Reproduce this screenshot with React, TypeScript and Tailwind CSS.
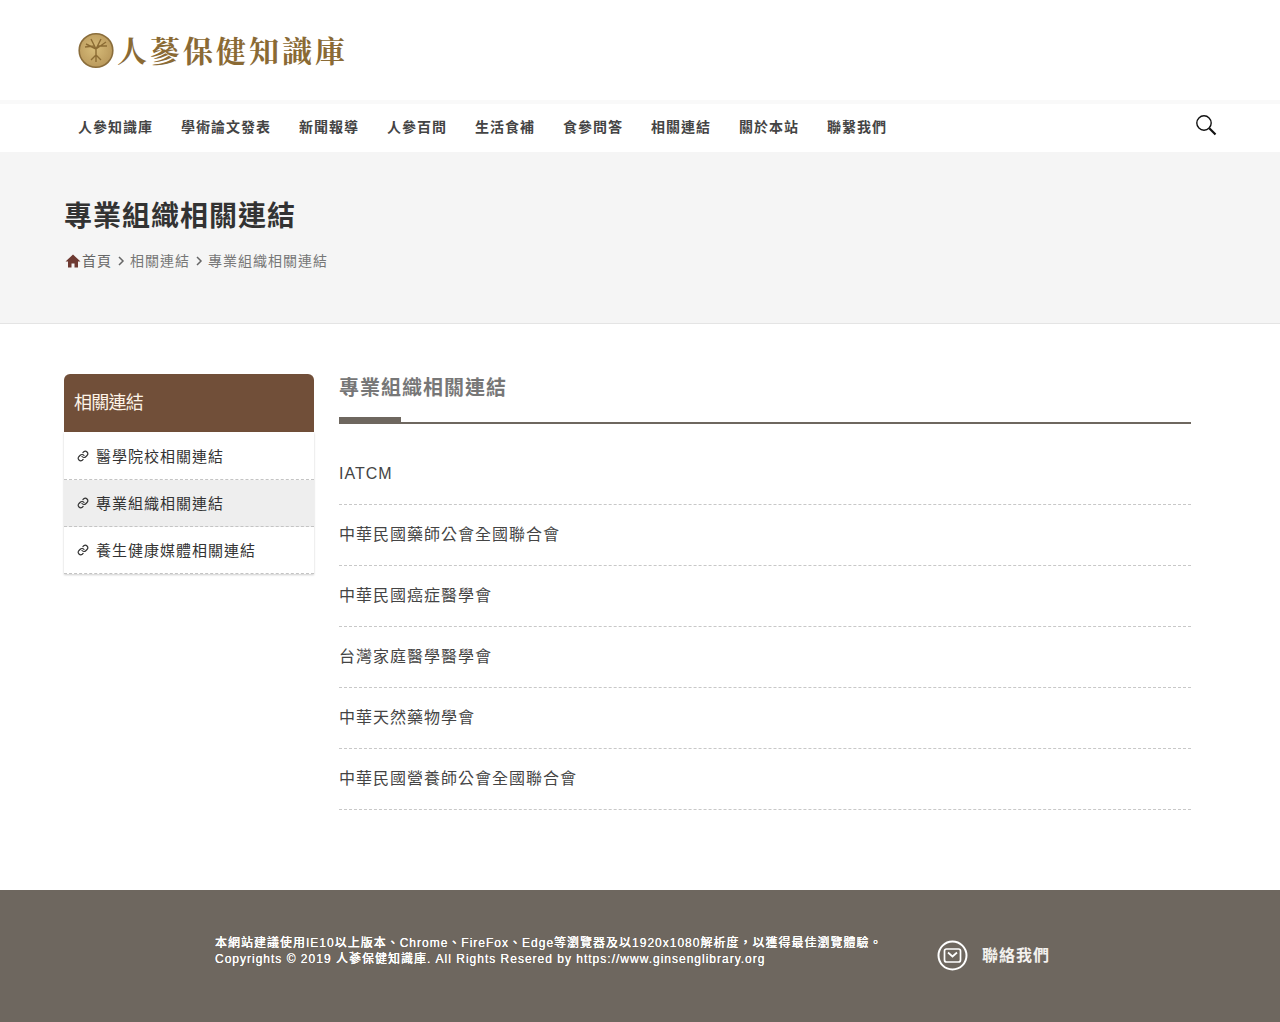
import React from "react";

const font = { fontFamily: '"Liberation Sans","Noto Sans CJK TC",sans-serif' };
const nav = ["人參知識庫", "學術論文發表", "新聞報導", "人參百問", "生活食補", "食參問答", "相關連結", "關於本站", "聯繫我們"];
const side = ["醫學院校相關連結", "專業組織相關連結", "養生健康媒體相關連結"];
const rows = ["IATCM", "中華民國藥師公會全國聯合會", "中華民國癌症醫學會", "台灣家庭醫學醫學會", "中華天然藥物學會", "中華民國營養師公會全國聯合會"];

function LinkIcon() {
  return (
    <svg width="12" height="12" viewBox="0 0 24 24" fill="none" stroke="#333" strokeWidth="2.4" strokeLinecap="round" strokeLinejoin="round" className="shrink-0 -mt-[2px]">
      <path d="M10 13a5 5 0 0 0 7.5.5l3-3a5 5 0 0 0-7-7l-1.7 1.7" />
      <path d="M14 11a5 5 0 0 0-7.5-.5l-3 3a5 5 0 0 0 7 7l1.7-1.7" />
    </svg>
  );
}

function Chevron() {
  return (
    <svg width="8" height="10" viewBox="0 0 8 10" fill="none" stroke="#666" strokeWidth="1.5" className="mx-[5px] shrink-0">
      <path d="M2 1l4 4-4 4" />
    </svg>
  );
}

export default function App() {
  return (
    <div style={font} className="w-[1280px] min-h-[1022px] bg-white flex flex-col">
      <header className="h-[100px] pl-[78px] pt-[32px] flex items-start">
        <svg width="36" height="37" viewBox="0 0 36 37" className="shrink-0">
          <defs>
            <radialGradient id="coin" cx="45%" cy="45%" r="60%">
              <stop offset="0%" stopColor="#d8bd7a" />
              <stop offset="100%" stopColor="#b8975a" />
            </radialGradient>
          </defs>
          <circle cx="18" cy="18.5" r="16.8" fill="url(#coin)" stroke="#8a6d3b" strokeWidth="1.6" />
          <path d="M18 30V17M18 17L8 12M18 17L28 10M18 17L13 7M18 17L23 7M18 23L13 28M18 23L23 28M7 15L16 14M29 14L20 14" stroke="#8c6c34" strokeWidth="1.4" fill="none" />
        </svg>
        <span className="ml-[3px] -mt-[1px] text-[30px] leading-[36px] tracking-[3px] font-bold text-[#8a6a34] whitespace-nowrap" style={{ fontFamily: '"Noto Serif CJK TC","Noto Sans CJK TC",serif' }}>
          人蔘保健知識庫
        </span>
      </header>
      <div className="h-[4px] bg-[#f9f9f9]" />
      <nav className="h-[48px] pl-[78px] pr-[63px] flex items-center">
        <ul className="flex gap-[14px] flex-1 mb-[2px]">
          {nav.map((n) => (
            <li key={n} className="text-[14px] font-bold tracking-[1px] text-[#444] whitespace-nowrap mr-[14px]">{n}</li>
          ))}
        </ul>
        <svg width="22" height="22" viewBox="0 0 22 22" fill="none" stroke="#111" className="mb-[6px]">
          <circle cx="9" cy="9" r="7.2" strokeWidth="1.4" />
          <path d="M14.3 14.3L20.5 20.5" strokeWidth="2.2" />
        </svg>
      </nav>
      <section className="h-[172px] bg-[#f5f5f5] border-b border-[#e4e4e4] pl-[64px] pt-[46px]">
        <h1 className="text-[28px] leading-[38px] font-bold tracking-[1px] text-[#333]">專業組織相關連結</h1>
        <div className="mt-[15px] ml-[1px] flex items-center text-[14px] leading-[20px] tracking-[1px] text-[#777]">
          <svg width="16" height="14" viewBox="0 0 16 14" className="shrink-0 mr-[1px]">
            <path d="M8 0.5L0.5 7.5H3V13.5H6.5V9.5H9.5V13.5H13V7.5H15.5Z" fill="#6e3a32" />
          </svg>
          <span className="text-[#666]">首頁</span>
          <Chevron />
          <span>相關連結</span>
          <Chevron />
          <span>專業組織相關連結</span>
        </div>
      </section>
      <main className="flex pl-[64px] pr-[89px] pt-[50px] h-[566px] gap-[25px]">
        <aside className="w-[250px] shrink-0">
          <div className="h-[58px] bg-[#714f39] rounded-t-[6px] px-[10px] flex items-center text-[18px] tracking-[-0.75px] text-[#fdf3e7]">相關連結</div>
          <ul className="pt-[1px] shadow-[0_1px_2px_rgba(0,0,0,0.2)]">
            {side.map((s, i) => (
              <li key={s} className={`h-[47px] pl-[13px] pt-[2px] flex items-center gap-[7px] border-b border-dashed border-[#c4c4c4] text-[15px] tracking-[1px] text-[#333] ${i === 1 ? "bg-[#eeeeee]" : "bg-white"}`}>
                <LinkIcon />
                <span>{s}</span>
              </li>
            ))}
          </ul>
        </aside>
        <div className="flex-1">
          <h2 className="text-[20px] leading-[28px] font-bold tracking-[1px] text-[#777]">專業組織相關連結</h2>
          <div className="relative mt-[15px] h-[7px] border-b-2 border-[#6e675f]">
            <div className="absolute left-0 top-0 w-[62px] h-[7px] bg-[#6e675f]" />
          </div>
          <ul className="mt-[20px]">
            {rows.map((r) => (
              <li key={r} className="h-[61px] flex items-center border-b border-dashed border-[#c8c8c8] text-[16px] tracking-[1px] text-[#444] pb-[1px]">{r}</li>
            ))}
          </ul>
        </div>
      </main>
      <footer className="h-[132px] bg-[#6e675f] pl-[215px] flex items-start text-white">
        <div className="pt-[45px] text-[12px] leading-[16px] font-medium tracking-[1px] text-white [text-shadow:0_0_0.6px_#fff] whitespace-nowrap w-[722px]">
          <div>本網站建議使用IE10以上版本、Chrome、FireFox、Edge等瀏覽器及以1920x1080解析度，以獲得最佳瀏覽體驗。</div>
          <div>Copyrights © 2019 人蔘保健知識庫. All Rights Resered by https://www.ginsenglibrary.org</div>
        </div>
        <div className="pt-[50px] flex items-center gap-[14px]">
          <svg width="31" height="31" viewBox="0 0 31 31" fill="none" stroke="#fff">
            <circle cx="15.5" cy="15.5" r="14" strokeWidth="2" />
            <rect x="7.5" y="9" width="16" height="13" rx="2" strokeWidth="1.7" />
            <path d="M11 12.5L15.5 16.5L20 12.5" strokeWidth="1.7" />
          </svg>
          <span className="text-[16px] font-bold tracking-[1px] text-[#f3f1ee]">聯絡我們</span>
        </div>
      </footer>
    </div>
  );
}
